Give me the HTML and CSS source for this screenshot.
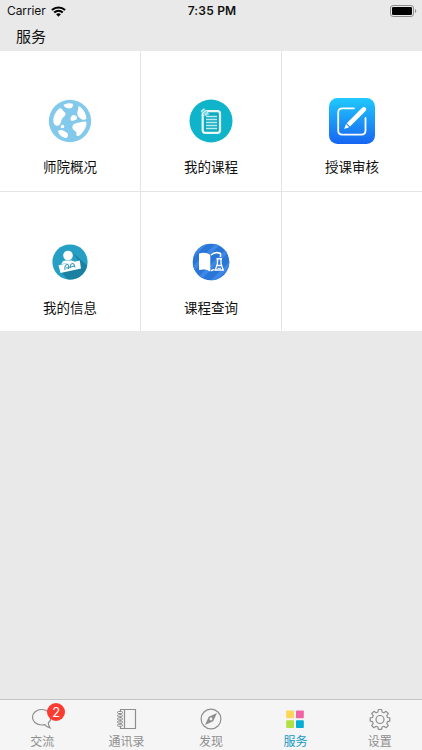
FILE: index.html
```html
<!DOCTYPE html>
<html lang="zh-CN">
<head>
    <meta charset="UTF-8">
    <meta name="viewport" content="width=device-width, initial-scale=1.0">
    <title>服务</title>
    <link rel="stylesheet" href="styles.css">
</head>
<body>
    <div class="app">
        <div class="status-bar">
            <div class="carrier">
                <span>Carrier</span>
                <svg width="15" height="11" viewBox="0 0 15 11" fill="none" stroke="#000" stroke-width="2">
                    <path d="M.9 4.1c3.8-3.5 9.4-3.5 13.2 0"/>
                    <path d="M3.2 6.5c2.500-2.200 6.100-2.200 8.600 0"/>
                    <path d="M5.100 8.200c1.400-1.200 3.400-1.200 4.800 0L7.500 10.700z" fill="#000" stroke="none"/>
                </svg>
            </div>
            <div class="time">7:35 PM</div>
            <div class="battery">
                <svg width="27" height="12" viewBox="0 0 27 12">
                    <rect x=".5" y=".5" width="23" height="11" rx="2.6" fill="none" stroke="#8b8b8b"/>
                    <rect x="2" y="2" width="20" height="8" rx="1.2"/>
                    <path d="M25 4v4c1.700-.6 1.700-3.400 0-4z" fill="#8b8b8b"/>
                </svg>
            </div>
        </div>

        <div class="nav-title">服务</div>

        <div class="service-grid">
            <a class="service-item">
                <span class="service-icon">
                    <svg width="44" height="44" viewBox="0 0 44 44">
                        <circle cx="22" cy="22" r="21.2" fill="#82c9ec"/>
                        <g fill="#fff">
                            <path d="M15.500 6c2.500-2 7-2.300 9.300-1.300.5 1.800-.3 3.800-1.800 4.600-2.500.5-6.500-.3-7.500-3.300z"/>
                            <path d="M30.500 7c4 2 7.500 6.500 8 12.500-1.500 2-4.500 1.500-6 0-1.500-1.300-3-2-3.200-4.500-.1-3 1.200-4 1.200-8z"/>
                            <path d="M11.500 9.500c1.500-.8 2.800.5 3.500 2 1 1.500 3 2 2.500 4.300-1 2.200-3.500 2.700-4 5.200-.5 3-2 6-4.500 5.700-2.500-.2-3.800-2.500-3.700-5.500.2-4.700 2.700-9.200 6.200-11.700z"/>
                            <path d="M22.500 20.500c-.2-2 1-3.800 2.500-4.500 2-.5 3.500.8 4 2.500.3 1.500-1 2.500-2.500 2.700-1.500.8-3.500 1.300-4-.7z"/>
                            <circle cx="14.500" cy="27.500" r="1.800"/>
                            <path d="M10 32c1.500-1.500 4.500-1.200 6.500.3 1.700 1.200 3.500 1.500 3.500 3.700 0 2-1 3.300-3 3-3-.8-6.500-3.500-7-7z"/>
                            <path d="M25.500 25.500c2-2 5.500-1.700 8-2.500 2-.5 4.800-1 5 1 .2 4-3.500 10.500-8 13-2 .5-2.500-1-2-3 0-2-3.500-2.500-4-5-.2-1.500 0-2.500 1-3.500z"/>
                        </g>
                    </svg>
                </span>
                <span class="service-name">师院概况</span>
            </a>
            <a class="service-item">
                <span class="service-icon">
                    <svg width="44" height="44" viewBox="0 0 44 44">
                        <circle cx="22" cy="22" r="21.500" fill="#0fb4cb"/>
                        <rect x="13.700" y="12.200" width="17.300" height="21.600" rx="2.500" fill="#0fabc1" stroke="#e9f9fb" stroke-width="2.200"/>
                        <path d="M17 17.500h11M17 20.500h11M17 23.500h11M17 26.500h11M17 29.500h11" stroke="#b9eaf0" stroke-width="1.300"/>
                        <path d="M11.500 12l3.500-3 5.500 6-3.500 2.500z" fill="#7fd6e1"/>
                        <path d="M12 12.500l3-2.500M13.500 14.500l3.500-3M15.500 16.500l3.500-3" stroke="#eafafb" stroke-width=".9"/>
                    </svg>
                </span>
                <span class="service-name">我的课程</span>
            </a>
            <a class="service-item">
                <span class="service-icon">
                    <svg width="48" height="48" viewBox="0 0 48 48">
                        <defs>
                            <linearGradient id="edit-bg" x1="0" y1="0" x2="0" y2="1">
                                <stop offset="0" stop-color="#20c9fd"/>
                                <stop offset="1" stop-color="#1765f2"/>
                            </linearGradient>
                        </defs>
                        <rect x="1" y="1" width="46" height="46" rx="8.500" fill="url(#edit-bg)"/>
                        <path d="M26 11.300H14.500c-2.800 0-4.300 1.500-4.300 4.200v18c0 2.700 1.500 4.200 4.300 4.200h18.700c2.800 0 4.300-1.500 4.300-4.200V21" fill="none" stroke="#fff" stroke-width="1.800" stroke-linecap="round"/>
                        <path d="M18.700 26.200L34.200 10.700c2.200-2.200 5.500 1 3.300 3.300L22 29.500z" fill="#fff"/>
                        <path d="M18 27l3.200 3.300-5 1.700z" fill="#fff"/>
                    </svg>
                </span>
                <span class="service-name">授课审核</span>
            </a>
            <a class="service-item">
                <span class="service-icon">
                    <svg width="36" height="36" viewBox="0 0 36 36">
                        <defs>
                            <clipPath id="info-clip"><circle cx="18" cy="18" r="17.600"/></clipPath>
                        </defs>
                        <g clip-path="url(#info-clip)">
                            <rect width="36" height="36" fill="#259fc4"/>
                            <path d="M20 8l18 16v14H18l-9-10 20-8z" fill="#1b81a1"/>
                        </g>
                        <circle cx="16" cy="11.500" r="4.800" fill="#fff"/>
                        <path d="M9.500 20c.5-2.500 2-3.500 4-3.500h5c2 0 3.500.5 4.500 2z" fill="#fff"/>
                        <path d="M6.500 21.200l21.200-4.700L29 24.500 8.500 29z" fill="#fff"/>
                        <path d="M13 26c-.5-3 .5-5 2-5.500s2 2 1.500 4.500M18.500 24c-.5-2.500.5-4.500 2-4.500s2 1.500 2.500 4M14 24l9-2" fill="none" stroke="#3b9fba" stroke-width="1.100"/>
                    </svg>
                </span>
                <span class="service-name">我的信息</span>
            </a>
            <a class="service-item">
                <span class="service-icon">
                    <svg width="38" height="38" viewBox="0 0 38 38">
                        <defs>
                            <clipPath id="query-clip"><circle cx="19" cy="19" r="18.300"/></clipPath>
                        </defs>
                        <g clip-path="url(#query-clip)">
                            <rect width="38" height="38" fill="#2a76d6"/>
                            <path d="M-2 15L17-4M-2 29L31-4M6 37L39 4M20 39L41 18" stroke="#3d87e6" stroke-width="4"/>
                        </g>
                        <path d="M7 10.500c4-1.500 8-1 11.300 1.500v16.500c-3.500-2.200-7.300-2.500-11.300-1.500z" fill="#fff"/>
                        <path d="M19 12c2.500-2.300 6-3 9.500-1.500v3.500M19 28c1.200-1 2.200-1.300 3.500-1.500" fill="none" stroke="#fff" stroke-width="1.500"/>
                        <path d="M24.500 15.700h5.500M25.500 16v4.500L23.300 27h7.900L29 20.500V16M25.300 22.500h4" fill="none" stroke="#fff" stroke-width="1.400"/>
                        <path d="M25.500 25.300h3.500" stroke="#fff"/>
                    </svg>
                </span>
                <span class="service-name">课程查询</span>
            </a>
            <div class="service-item"></div>
        </div>

        <div class="tab-bar">
            <a class="tab">
                <span class="tab-icon">
                    <svg width="22" height="22" viewBox="0 0 22 22" fill="none" stroke="#8e8e8e" stroke-width="1.200">
                        <path d="M13.800 16.600c-1 .3-2 .4-3.100.4C5.500 17 1.500 13.500 1.500 9.300S5.500 1.500 10.700 1.500s9.300 3.600 9.300 7.800c0 2.300-1 4.200-2.700 5.700.2 2 .8 3.600 1.800 4.800-2-.3-4-1.300-5.300-3.200z"/>
                    </svg>
                    <span class="badge">2</span>
                </span>
                <span class="tab-name">交流</span>
            </a>
            <a class="tab">
                <span class="tab-icon">
                    <svg width="22" height="22" viewBox="0 0 22 22" fill="none" stroke="#8e8e8e">
                        <path d="M4.500 1.500h15v19h-15zM8.500 1.500v19" stroke-width="1.200"/>
                        <g fill="#f5f5f5">
                            <rect x="1.500" y="3.500" width="5" height="2" rx="1"/>
                            <rect x="1.500" y="6.700" width="5" height="2" rx="1"/>
                            <rect x="1.500" y="9.900" width="5" height="2" rx="1"/>
                            <rect x="1.500" y="13.100" width="5" height="2" rx="1"/>
                            <rect x="1.500" y="16.300" width="5" height="2" rx="1"/>
                        </g>
                    </svg>
                </span>
                <span class="tab-name">通讯录</span>
            </a>
            <a class="tab">
                <span class="tab-icon">
                    <svg width="22" height="22" viewBox="0 0 22 22">
                        <circle cx="11" cy="11" r="9.900" fill="none" stroke="#8e8e8e" stroke-width="1.200"/>
                        <path fill-rule="evenodd" d="M17 5l-3.800 8.200L5 17l3.800-8.200zM11 9.600a1.400 1.400 0 1 0 0 2.800 1.400 1.400 0 0 0 0-2.800z" fill="#8e8e8e"/>
                    </svg>
                </span>
                <span class="tab-name">发现</span>
            </a>
            <a class="tab active">
                <span class="tab-icon">
                    <svg width="22" height="22" viewBox="0 0 22 22">
                        <rect x="2.200" y="2.500" width="7.800" height="7.800" rx=".8" fill="#fed557"/>
                        <rect x="12" y="2.500" width="7.800" height="7.800" rx=".8" fill="#f064a6"/>
                        <rect x="2.200" y="12.200" width="7.800" height="7.800" rx=".8" fill="#b1e045"/>
                        <rect x="12" y="12.200" width="7.800" height="7.800" rx=".8" fill="#05aed2"/>
                    </svg>
                </span>
                <span class="tab-name">服务</span>
            </a>
            <a class="tab">
                <span class="tab-icon">
                    <svg width="22" height="22" viewBox="0 0 22 22" fill="none" stroke="#8e8e8e" stroke-width="1.200" stroke-linejoin="round">
                        <path d="M9.400 1.500h3.200l.5 2.500 1.800.8 2.200-1.500 2.200 2.200-1.500 2.200.8 1.800 2.200.4v3.200l-2.200.5-.8 1.800 1.500 2.200-2.200 2.100-2.200-1.400-1.800.7-.5 2.300H9.400l-.5-2.300-1.800-.7-2.200 1.400-2.200-2.100 1.500-2.200-.8-1.800-2.200-.5V9.900l2.200-.4.800-1.800-1.500-2.200 2.200-2.200 2.200 1.500 1.800-.8z"/>
                        <circle cx="11" cy="11.500" r="4"/>
                    </svg>
                </span>
                <span class="tab-name">设置</span>
            </a>
        </div>
    </div>
</body>
</html>
```
FILE: styles.css
```css
* {
    box-sizing: border-box;
}

body {
    margin: 0;
    font-family: Inter, "Noto Sans CJK SC", sans-serif;
    background-color: #e9e9e9;
    color: #111;
}

.app {
    display: flex;
    flex-direction: column;
    height: 750px;
    overflow: hidden;
}

svg {
    display: block;
}

/* Status bar */
.status-bar {
    display: grid;
    grid-template-columns: 1fr auto 1fr;
    align-items: center;
    height: 22px;
    padding: 0 5px 0 7px;
    font-size: 12px;
    line-height: 22px;
}

.carrier {
    display: flex;
    align-items: center;
    gap: 5px;
    letter-spacing: -0.1px;
}

.time {
    font-weight: 600;
    letter-spacing: 0.2px;
}

.battery {
    display: flex;
    justify-content: flex-end;
}

.nav-title {
    height: 29px;
    padding-left: 16px;
    font-size: 15px;
    line-height: 29px;
}

.service-grid {
    display: grid;
    grid-template-columns: 140px 140px 140px;
    grid-template-rows: 140px 139px;
    gap: 1px;
    background: #e5e5e5;
}

.service-item {
    display: flex;
    flex-direction: column;
    align-items: center;
    padding-top: 42px;
    background: #fff;
}

.service-icon {
    display: flex;
    align-items: center;
    justify-content: center;
    height: 56px;
}

.service-name {
    margin-top: 8px;
    font-size: 13.5px;
    line-height: 20px;
}

/* Bottom tabs */
.tab-bar {
    display: flex;
    height: 51px;
    margin-top: auto;
    border-top: 1px solid #c4c4c4;
    background: #f5f5f5;
}

.tab {
    display: flex;
    flex: 1;
    flex-direction: column;
    align-items: center;
    padding-top: 8px;
    color: #8e8e8e;
}

.tab.active {
    color: #1699c4;
}

.tab-icon {
    position: relative;
}

.tab-name {
    margin-top: 4px;
    font-size: 12px;
    line-height: 16px;
}

.badge {
    position: absolute;
    top: -5px;
    left: 16px;
    width: 18px;
    height: 18px;
    border-radius: 50%;
    background: #fc3b30;
    color: #fff;
    font-size: 13px;
    line-height: 18px;
    text-align: center;
}
```
